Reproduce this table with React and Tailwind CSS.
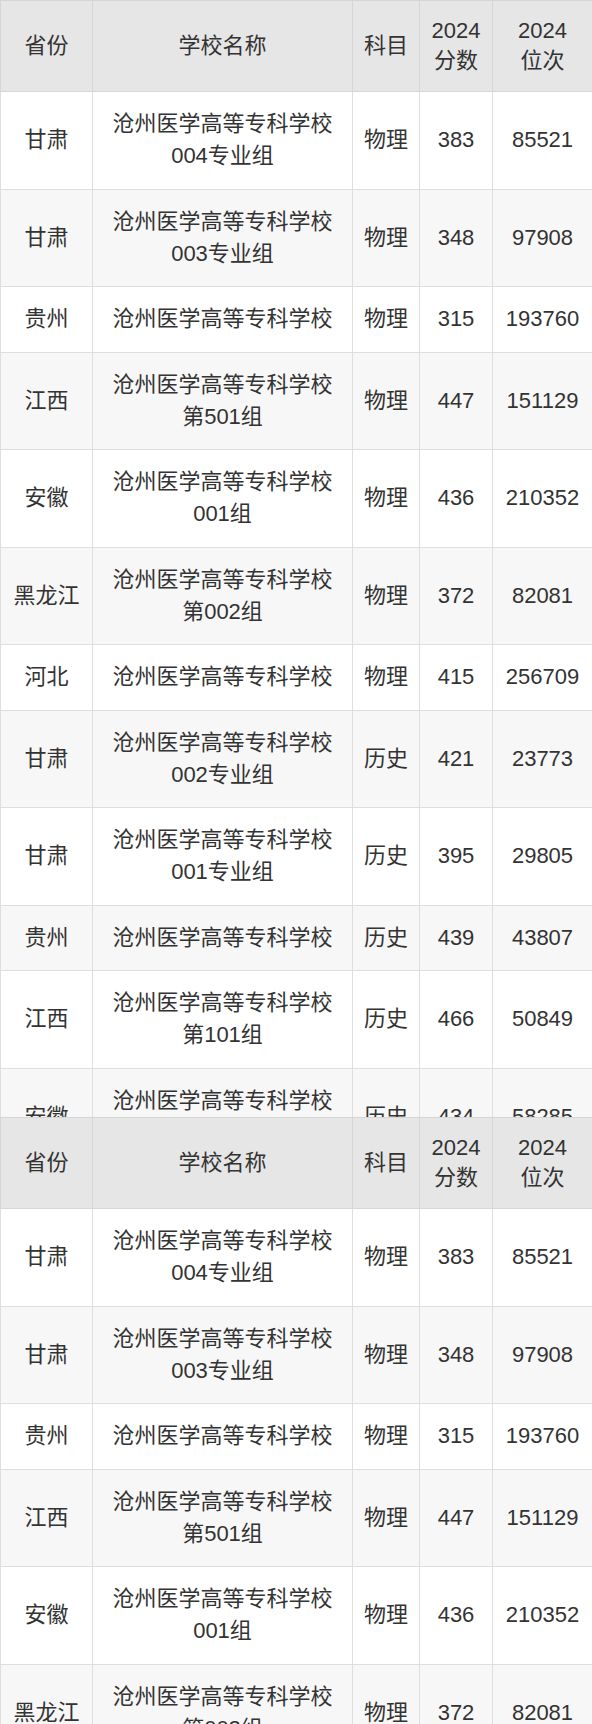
import React from "react";

const rows = [
  ["甘肃", "沧州医学高等专科学校", "004专业组", "物理", "383", "85521"],
  ["甘肃", "沧州医学高等专科学校", "003专业组", "物理", "348", "97908"],
  ["贵州", "沧州医学高等专科学校", "", "物理", "315", "193760"],
  ["江西", "沧州医学高等专科学校", "第501组", "物理", "447", "151129"],
  ["安徽", "沧州医学高等专科学校", "001组", "物理", "436", "210352"],
  ["黑龙江", "沧州医学高等专科学校", "第002组", "物理", "372", "82081"],
  ["河北", "沧州医学高等专科学校", "", "物理", "415", "256709"],
  ["甘肃", "沧州医学高等专科学校", "002专业组", "历史", "421", "23773"],
  ["甘肃", "沧州医学高等专科学校", "001专业组", "历史", "395", "29805"],
  ["贵州", "沧州医学高等专科学校", "", "历史", "439", "43807"],
  ["江西", "沧州医学高等专科学校", "第101组", "历史", "466", "50849"],
  ["安徽", "沧州医学高等专科学校", "001组", "历史", "434", "58285"],
];

const font = {
  fontFamily: '"Liberation Sans", Arial, "Noto Sans CJK SC", sans-serif',
};

function Th({ children }) {
  return (
    <th className="border border-[#d6d6d6] bg-[#e6e6e6] px-[6px] py-[15px] text-center align-middle text-[22px] font-normal leading-[30px] text-[#333]">
      {children}
    </th>
  );
}

function Td({ children }) {
  return (
    <td className="border border-[#dedede] px-[6px] py-[16.25px] text-center align-middle text-[22px] leading-[32px] text-[#333]">
      {children}
    </td>
  );
}

function Table() {
  return (
    <table className="w-[592px] table-fixed border-collapse" style={font}>
      <colgroup>
        <col className="w-[92px]" />
        <col className="w-[260px]" />
        <col className="w-[67px]" />
        <col className="w-[73px]" />
        <col className="w-[100px]" />
      </colgroup>
      <thead>
        <tr>
          <Th>省份</Th>
          <Th>学校名称</Th>
          <Th>科目</Th>
          <Th>
            <span className="block">2024</span>
            <span className="block">分数</span>
          </Th>
          <Th>
            <span className="block">2024</span>
            <span className="block">位次</span>
          </Th>
        </tr>
      </thead>
      <tbody>
        {rows.map((r, i) => (
          <tr key={i} className={i % 2 === 1 ? "bg-[#f7f7f7]" : "bg-white"}>
            <Td>{r[0]}</Td>
            <Td>
              <span className="block">{r[1]}</span>
              {r[2] ? <span className="block">{r[2]}</span> : null}
            </Td>
            <Td>{r[3]}</Td>
            <Td>{r[4]}</Td>
            <Td>{r[5]}</Td>
          </tr>
        ))}
      </tbody>
    </table>
  );
}

export default function App() {
  return (
    <div className="h-[1724px] w-[592px] overflow-hidden bg-white">
      <div className="h-[1117px] overflow-hidden">
        <Table />
      </div>
      <div className="h-[607px] overflow-hidden">
        <Table />
      </div>
    </div>
  );
}
